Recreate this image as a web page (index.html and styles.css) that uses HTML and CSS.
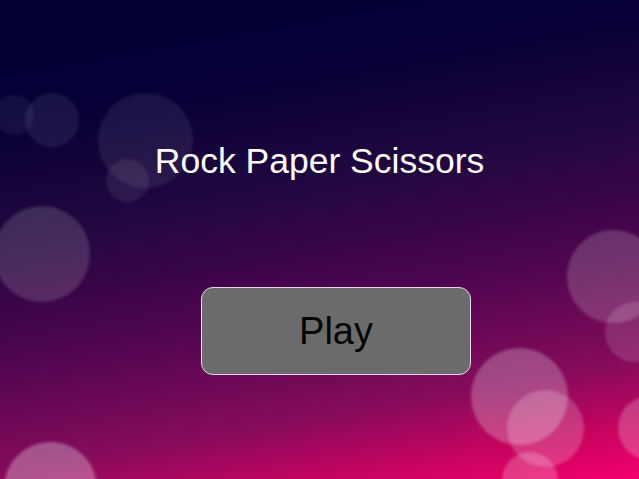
FILE: index.html
```html
<!DOCTYPE html>
<html lang="en">
<head>
<meta charset="utf-8">
<title>Rock Paper Scissors</title>
<link rel="stylesheet" href="styles.css">
</head>
<body>
<div class="screen">
  <div class="bokeh" aria-hidden="true">
    <span class="dot d1"></span>
    <span class="dot d2"></span>
    <span class="dot d3"></span>
    <span class="dot d4"></span>
    <span class="dot d5"></span>
    <span class="dot d6"></span>
    <span class="dot d7"></span>
    <span class="dot d8"></span>
    <span class="dot d9"></span>
    <span class="dot d10"></span>
    <span class="dot d11"></span>
    <span class="dot d12"></span>
  </div>
  <main class="menu">
    <h1 class="title">Rock Paper Scissors</h1>
    <button class="play">Play</button>
  </main>
</div>
</body>
</html>
```

FILE: styles.css
```css
html, body {
  margin: 0;
  padding: 0;
  height: 100%;
}
body {
  font-family: "Liberation Sans", Arial, sans-serif;
  overflow: hidden;
}
.screen {
  position: relative;
  width: 100%;
  height: 100%;
  overflow: hidden;
  background: linear-gradient(170deg,
    #020033 0%,
    #060036 20%,
    #20073f 40%,
    #4c054e 60%,
    #860b5c 80%,
    #c2045f 90%,
    #f5006c 100%);
}
.bokeh {
  position: absolute;
  inset: 0;
  pointer-events: none;
}
.dot {
  position: absolute;
  border-radius: 50%;
  background: rgba(255, 255, 255, 0.1);
  filter: blur(1.5px);
}
.d1  { left: -6px;  top: 95px;  width: 40px; height: 40px; background: rgba(255,255,255,0.06); }
.d2  { left: 25px;  top: 93px;  width: 54px; height: 54px; background: rgba(255,255,255,0.08); }
.d3  { left: 98px;  top: 93px;  width: 95px; height: 95px; background: rgba(255,255,255,0.08); }
.d4  { left: 106px; top: 159px; width: 43px; height: 43px; background: rgba(255,255,255,0.08); }
.d5  { left: -6px;  top: 206px; width: 96px; height: 96px; background: rgba(255,255,255,0.15); }
.d6  { left: 4px;   top: 442px; width: 93px; height: 93px; background: rgba(255,255,255,0.3); }
.d7  { left: 567px; top: 230px; width: 93px; height: 93px; background: rgba(255,255,255,0.18); }
.d8  { left: 605px; top: 302px; width: 60px; height: 60px; background: rgba(255,255,255,0.14); }
.d9  { left: 471px; top: 348px; width: 97px; height: 97px; background: rgba(255,255,255,0.25); }
.d10 { left: 507px; top: 390px; width: 77px; height: 77px; background: rgba(255,255,255,0.2); }
.d11 { left: 618px; top: 396px; width: 64px; height: 64px; background: rgba(255,255,255,0.22); }
.d12 { left: 502px; top: 452px; width: 56px; height: 56px; background: rgba(255,255,255,0.22); }

.menu {
  position: relative;
  display: flex;
  flex-direction: column;
  align-items: center;
}
.title {
  margin: 141px 0 0;
  font-size: 35.5px;
  line-height: 40px;
  font-weight: normal;
  color: #ffffff;
}
.play {
  align-self: flex-start;
  margin: 106px 0 0 201px;
  width: 270px;
  height: 88px;
  padding: 0;
  background: #6b6b6b;
  border: 1px solid #ecd6e6;
  border-radius: 12px;
  color: #050505;
  font-family: "Liberation Sans", Arial, sans-serif;
  font-size: 38px;
  cursor: pointer;
}
```
